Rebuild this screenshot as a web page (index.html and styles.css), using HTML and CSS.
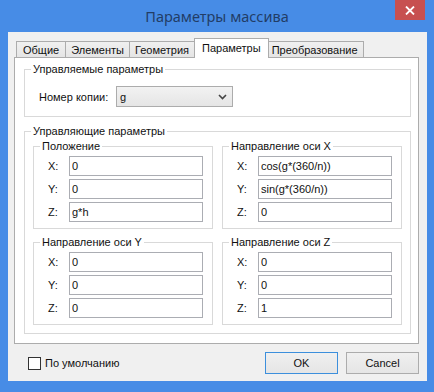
FILE: index.html
```html
<!DOCTYPE html>
<html lang="ru">
<head>
    <meta charset="UTF-8">
    <title>Параметры массива</title>
    <link rel="stylesheet" href="styles.css">
</head>
<body>
    <div class="window">
        <!-- Title bar -->
        <div class="titlebar">
            <span class="title">Параметры массива</span>
            <button class="close" type="button">
                <svg width="10" height="9" viewBox="0 0 10 9">
                    <path d="M1 0.5 L9 8.5 M9 0.5 L1 8.5" stroke="#fff" stroke-width="1.8"/>
                </svg>
            </button>
        </div>

        <div class="client">
            <!-- Tabs -->
            <div class="tabs">
                <div class="tab first">Общие</div>
                <div class="tab">Элементы</div>
                <div class="tab">Геометрия</div>
                <div class="tab active">Параметры</div>
                <div class="tab">Преобразование</div>
            </div>

            <div class="panel">
                <fieldset class="group">
                    <legend>Управляемые параметры</legend>
                    <div class="copy-row">
                        <label>Номер копии:</label>
                        <div class="combo">
                            <span>g</span>
                            <svg width="9" height="6" viewBox="0 0 9 6">
                                <path d="M1 1 L4.5 4.5 L8 1" fill="none" stroke="#444" stroke-width="1.6"/>
                            </svg>
                        </div>
                    </div>
                </fieldset>

                <fieldset class="group">
                    <legend>Управляющие параметры</legend>
                    <div class="axes">
                        <fieldset class="group">
                            <legend>Положение</legend>
                            <div class="rows">
                                <div class="row"><label>X:</label><input type="text" value="0"></div>
                                <div class="row"><label>Y:</label><input type="text" value="0"></div>
                                <div class="row"><label>Z:</label><input type="text" value="g*h"></div>
                            </div>
                        </fieldset>
                        <fieldset class="group">
                            <legend>Направление оси X</legend>
                            <div class="rows">
                                <div class="row"><label>X:</label><input type="text" value="cos(g*(360/n))"></div>
                                <div class="row"><label>Y:</label><input type="text" value="sin(g*(360/n))"></div>
                                <div class="row"><label>Z:</label><input type="text" value="0"></div>
                            </div>
                        </fieldset>
                        <fieldset class="group">
                            <legend>Направление оси Y</legend>
                            <div class="rows">
                                <div class="row"><label>X:</label><input type="text" value="0"></div>
                                <div class="row"><label>Y:</label><input type="text" value="0"></div>
                                <div class="row"><label>Z:</label><input type="text" value="0"></div>
                            </div>
                        </fieldset>
                        <fieldset class="group">
                            <legend>Направление оси Z</legend>
                            <div class="rows">
                                <div class="row"><label>X:</label><input type="text" value="0"></div>
                                <div class="row"><label>Y:</label><input type="text" value="0"></div>
                                <div class="row"><label>Z:</label><input type="text" value="1"></div>
                            </div>
                        </fieldset>
                    </div>
                </fieldset>
            </div>

            <!-- Bottom buttons -->
            <div class="footer">
                <label class="check"><span class="box"></span>По умолчанию</label>
                <div class="buttons">
                    <button class="btn default" type="button">OK</button>
                    <button class="btn" type="button">Cancel</button>
                </div>
            </div>
        </div>
    </div>
</body>
</html>
```

FILE: styles.css
```css
body {
    margin: 0;
    background-color: #478ce6; /* window frame blue */
    font-family: "Liberation Sans", Arial, sans-serif;
    font-size: 11px;
    color: #111;
}
.window {
    width: 434px;
    height: 392px;
    display: flex;
    flex-direction: column;
}
.titlebar {
    height: 32px;
    flex: none;
    position: relative;
    display: flex;
    align-items: center;
    justify-content: center;
}
.title {
    font-family: "Noto Sans", "DejaVu Sans", sans-serif;
    font-size: 14.5px;
    color: #223d66;
}
.close {
    position: absolute;
    top: 0;
    right: 9px;
    width: 30px;
    height: 20px;
    padding: 0;
    border: none;
    background-color: #c75050;
    display: flex;
    align-items: center;
    justify-content: center;
}
.client {
    flex: 1;
    margin: 0 7px 11px 8px;
    padding: 6px 8px 7px 6px;
    background-color: #f0f0f0;
    display: flex;
    flex-direction: column;
}
.tabs {
    display: flex;
    align-items: flex-end;
    height: 20px;
    margin-bottom: -1px;
    padding-left: 2px;
    position: relative;
    z-index: 1;
}
.tab {
    height: 15px;
    line-height: 16px;
    padding: 0 5px;
    margin-bottom: 1px;
    border: 1px solid #acacac;
    border-bottom: none;
    background: linear-gradient(#f0f0f0, #e5e5e5);
    white-space: nowrap;
}
.tab.first {
    padding: 0 6px;
}
.tab + .tab {
    margin-left: -1px;
}
.tab.active {
    height: 19px;
    line-height: 18px;
    margin: 0 -2px 0 -1px;
    padding: 0 7px;
    background: #fff;
    position: relative;
    z-index: 1;
}
.panel {
    flex: none;
    background-color: #fff;
    border: 1px solid #acacac;
    padding: 4px 7px 9px 9px;
}
.group {
    margin: 0;
    padding: 0;
    min-inline-size: 0;
    border: 1px solid #d9d9d9;
}
.group legend {
    margin-left: 6px;
    padding: 0 2px;
    line-height: 14px;
}
.group + .group {
    margin-top: 7px;
}
.copy-row {
    display: flex;
    align-items: center;
    padding: 10px 0 9px 14px;
}
.copy-row label {
    width: 77px;
}
.combo {
    box-sizing: border-box;
    width: 117px;
    height: 21px;
    border: 1px solid #acacac;
    background: linear-gradient(#f2f2f2, #e5e5e5);
    display: flex;
    align-items: center;
    justify-content: space-between;
    padding: 0 5px 0 3px;
}
.axes {
    display: grid;
    grid-template-columns: 1fr 1fr;
    column-gap: 9px;
    row-gap: 6px;
    padding: 1px 8px 8px 8px;
}
.axes .group + .group {
    margin-top: 0;
}
.rows {
    display: flex;
    flex-direction: column;
    gap: 3px;
    padding: 3px 9px 6px 14px;
}
.row {
    display: flex;
    align-items: center;
}
.row label {
    width: 21px;
}
.row input {
    flex: 1;
    min-width: 0;
    box-sizing: border-box;
    height: 20px;
    margin: 0;
    padding: 0 2px;
    border: 1px solid #abadb3;
    font: inherit;
    color: #111;
    outline: none;
}
.footer {
    display: flex;
    align-items: center;
    justify-content: space-between;
    padding: 8px 0 0 14px;
}
.check {
    display: flex;
    align-items: center;
    gap: 4px;
}
.box {
    width: 11px;
    height: 11px;
    border: 1px solid #333;
    background-color: #fff;
}
.buttons {
    display: flex;
    gap: 8px;
}
.btn {
    width: 73px;
    height: 22px;
    padding: 0;
    border: 1px solid #acacac;
    background: linear-gradient(#f0f0f0, #e5e5e5);
    font: inherit;
    color: #111;
}
.btn.default {
    border-color: #3c8fdc;
}
```
